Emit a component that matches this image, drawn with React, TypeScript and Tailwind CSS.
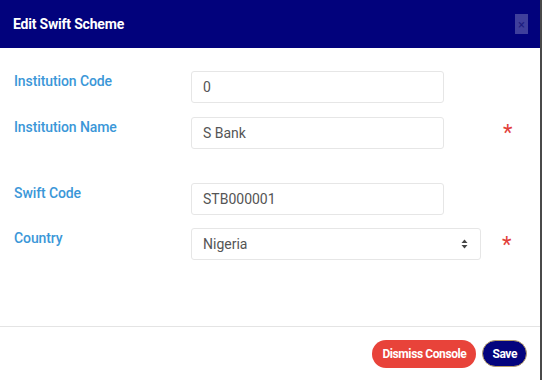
import React from "react";

const Label = ({ children }: { children: React.ReactNode }) => (
  <div className="w-[177px] shrink-0 pt-[1px] text-[14px] font-medium leading-[18px] tracking-[-0.1px] text-[#3b97d8]">
    {children}
  </div>
);

export default function App() {
  return (
    <div
      className="relative h-[380px] w-[543px] bg-white"
      style={{ fontFamily: "Roboto, 'Liberation Sans', sans-serif" }}
    >
      <div className="flex h-[380px] w-[542px] flex-col border-r-2 border-[#4a4a4a]">
        <div className="flex h-[48px] items-center justify-between bg-[#02027c] pl-[13px] pr-[12px]">
          <div className="text-[14px] font-bold tracking-[-0.2px] text-white">Edit Swift Scheme</div>
          <div className="flex h-[20px] w-[13px] items-center justify-center bg-[#3f3f9c] text-[13px] leading-none text-[#1c1c80]">
            ×
          </div>
        </div>

        <div className="flex flex-1 flex-col pl-[14px] pt-[23px]">
          <div className="flex items-start">
            <Label>Institution Code</Label>
            <div className="flex h-[32px] w-[253px] items-center rounded-[3px] border border-[#e6e6e6] px-[11px] text-[14px] text-[#555]">
              0
            </div>
          </div>
          <div className="mt-[14px] flex items-start">
            <Label>Institution Name</Label>
            <div className="flex h-[32px] w-[253px] items-center rounded-[3px] border border-[#e6e6e6] px-[11px] text-[14px] text-[#555]">
              S Bank
            </div>
            <div className="ml-[59px] mt-[5px] text-[22px] leading-[22px] text-[#e2403a]">*</div>
          </div>
          <div className="mt-[34px] flex items-start">
            <Label>Swift Code</Label>
            <div className="flex h-[32px] w-[253px] items-center rounded-[3px] border border-[#e6e6e6] px-[11px] text-[14px] text-[#555]">
              STB000001
            </div>
          </div>
          <div className="mt-[13px] flex items-start">
            <Label>Country</Label>
            <div className="flex h-[32px] w-[290px] items-center justify-between rounded-[3px] border border-[#e6e6e6] pl-[11px] pr-[12px] text-[14px] text-[#555]">
              <span>Nigeria</span>
              <svg width="7" height="10" viewBox="0 0 7 10">
                <path d="M3.5 0.5 L6.5 4 L0.5 4 Z" fill="#444" />
                <path d="M3.5 9.5 L6.5 6 L0.5 6 Z" fill="#444" />
              </svg>
            </div>
            <div className="ml-[21px] mt-[6px] text-[22px] leading-[22px] text-[#e2403a]">*</div>
          </div>
        </div>

        <div className="h-[1px] bg-[#e4e4e4]" />
        <div className="flex h-[53px] items-center justify-end gap-[6px] pr-[13px]">
          <div className="flex h-[28px] items-center rounded-full bg-[#e8433a] px-[10px] text-[12px] font-bold tracking-[-0.4px] text-white">
            Dismiss Console
          </div>
          <div className="flex h-[27px] items-center rounded-full border border-[#b79f6a] bg-[#04047e] px-[9px] text-[12px] font-bold tracking-[-0.4px] text-white">
            Save
          </div>
        </div>
      </div>
    </div>
  );
}
